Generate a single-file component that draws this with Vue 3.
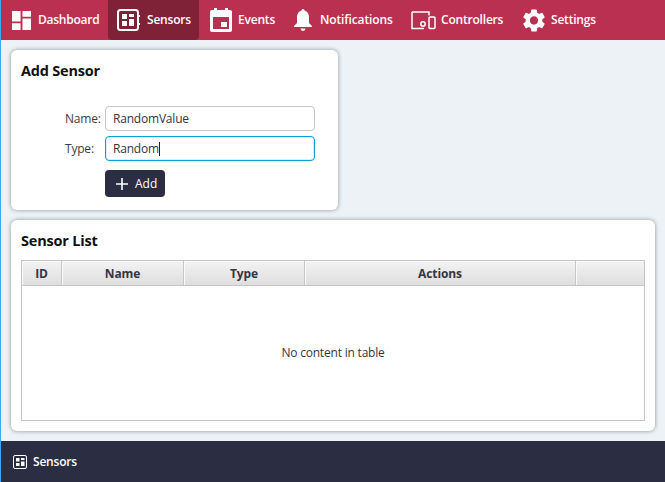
<script setup>
const columns = [
  { label: 'ID', width: 40 },
  { label: 'Name', width: 122 },
  { label: 'Type', width: 121 },
  { label: 'Actions', width: 271 },
  { label: '', width: 68 }
]
</script>

<template>
  <div class="window">
    <nav class="nav">
      <a class="item dash">
        <svg width="19" height="19" viewBox="0 0 20 20"><path fill="#fff" d="M0 0h9v11H0zM11 0h9v6h-9zM11 8h9v12h-9zM0 13h9v7H0z"/></svg>
        <span>Dashboard</span>
      </a>
      <a class="item active">
        <svg width="23" height="22" viewBox="0 0 23 22"><rect x="1" y="1" width="20" height="20" rx="2.500" fill="none" stroke="#fff" stroke-width="2"/><path fill="#fff" d="M5 5h5v5H5zM12 5h5v3h-5zM12 10h5v7h-5zM5 12h5v5H5zM21 6h2v2h-2zM21 14h2v2h-2z"/></svg>
        <span>Sensors</span>
      </a>
      <a class="item events">
        <svg width="22" height="24" viewBox="0 0 22 24"><path fill="#fff" fill-rule="evenodd" d="M4 0h3v2h8V0h3v2h2a2 2 0 0 1 2 2v18a2 2 0 0 1-2 2H2a2 2 0 0 1-2-2V4a2 2 0 0 1 2-2h2zM3 9v12h16V9zM11 14h6v5h-6z"/></svg>
        <span>Events</span>
      </a>
      <a class="item notif">
        <svg width="18" height="22" viewBox="0 0 18 22"><path fill="#fff" d="M9 0a1.6 1.6 0 0 1 1.6 1.7C13.6 2.4 15 5 15 8v6l3 3v1H0v-1l3-3V8c0-3 1.4-5.600 4.400-6.300A1.600 1.600 0 0 1 9 0zM6.500 19.500h5a2.500 2.500 0 0 1-5 0z"/></svg>
        <span>Notifications</span>
      </a>
      <a class="item ctrl">
        <svg width="25" height="19" viewBox="0 0 25 19"><path fill="none" stroke="#fff" stroke-width="1.500" d="M1 1h17v3.500M1 1v16.500h12"/><rect x="18" y="6" width="6" height="11.500" rx="1" fill="none" stroke="#fff" stroke-width="1.500"/><circle cx="12" cy="13" r="2.200" fill="none" stroke="#fff" stroke-width="1.500"/></svg>
        <span>Controllers</span>
      </a>
      <a class="item settings">
        <svg width="22" height="23" viewBox="2.500 2 19 20"><path fill="#fff" d="M19.14 12.94c.04-.3.06-.61.06-.94 0-.32-.02-.64-.07-.94l2.03-1.58a.49.49 0 0 0 .12-.61l-1.92-3.32a.488.488 0 0 0-.59-.22l-2.39.96c-.5-.38-1.03-.7-1.62-.94l-.36-2.54a.484.484 0 0 0-.48-.41h-3.84c-.24 0-.43.17-.47.41l-.36 2.54c-.59.24-1.13.57-1.62.94l-2.39-.96c-.22-.08-.47 0-.59.22L2.74 8.87c-.12.21-.08.47.12.61l2.03 1.58c-.05.3-.09.63-.09.94s.02.64.07.94l-2.03 1.58a.49.49 0 0 0-.12.61l1.92 3.32c.12.22.37.29.59.22l2.39-.96c.5.38 1.03.7 1.62.94l.36 2.54c.05.24.24.41.48.41h3.84c.24 0 .44-.17.47-.41l.36-2.54c.59-.24 1.13-.56 1.62-.94l2.39.96c.22.08.47 0 .59-.22l1.92-3.32c.12-.22.07-.47-.12-.61l-2.01-1.58zM12 15.6c-1.98 0-3.6-1.62-3.6-3.6s1.62-3.6 3.6-3.6 3.6 1.62 3.6 3.6-1.62 3.6-3.6 3.6z"/></svg>
        <span>Settings</span>
      </a>
    </nav>

    <main class="content">
      <section class="card add">
        <h2>Add Sensor</h2>
        <div class="form">
          <div class="row">
            <label class="lbl">Name:</label>
            <div class="input">RandomValue</div>
          </div>
          <div class="row">
            <label class="lbl">Type:</label>
            <div class="input focus">Random<i class="caret"></i></div>
          </div>
          <div class="row">
            <span class="lbl"></span>
            <button class="btn">
              <svg width="12" height="12" viewBox="0 0 12 12"><path fill="#fff" d="M5.200 0h1.600v5.200H12v1.600H6.800V12H5.200V6.800H0V5.200h5.200z"/></svg>
              <span>Add</span>
            </button>
          </div>
        </div>
      </section>

      <section class="card list">
        <h2>Sensor List</h2>
        <div class="table">
          <div class="thead">
            <div v-for="c in columns" :key="c.label" class="th" :style="{ width: c.width + 'px' }">{{ c.label }}</div>
          </div>
          <div class="empty">No content in table</div>
        </div>
      </section>
    </main>

    <footer class="foot">
      <svg width="14" height="14" viewBox="0 0 14 14"><rect x="0.500" y="0.500" width="13" height="13" rx="1.500" fill="none" stroke="#fff"/><path fill="#fff" d="M3 3h3.500v3.500H3zM8 3h3.500v2H8zM8 6.500h3.500V11H8zM3 8h3.500v3H3z"/></svg>
      <span>Sensors</span>
    </footer>
  </div>
</template>

<style>
html, body { margin: 0; padding: 0; }
</style>

<style scoped>
.window {
  width: 665px;
  height: 482px;
  box-sizing: border-box;
  display: flex;
  flex-direction: column;
  background: #ecf2f5;
  border-left: 1px solid #3ba9f0;
  font-family: "Open Sans", "Noto Sans", sans-serif;
  font-size: 12px;
  color: #2a2d33;
  overflow: hidden;
}
.nav {
  height: 40px;
  flex: none;
  display: flex;
  align-items: center;
  background: #b93050;
  color: #fff;
  font-weight: 600;
}
.item {
  height: 40px;
  display: flex;
  align-items: center;
  box-sizing: border-box;
  letter-spacing: -0.2px;
}
.item span { padding-bottom: 2px; }
.dash { padding-left: 11px; gap: 7px; width: 106px; letter-spacing: -0.25px; }
.dash + .item { margin-left: 1px; }
.active {
  width: 91px;
  padding-left: 9px;
  gap: 7px;
  background: #7f2237;
  border-radius: 0 0 4px 4px;
}
.events { margin-left: 11px; gap: 6px; width: 84px; }
.notif { gap: 8px; width: 117px; letter-spacing: -0.12px; }
.ctrl { gap: 5px; width: 111px; }
.settings { gap: 6px; margin-left: 1px; }
.content {
  flex: 1;
  display: flex;
  flex-direction: column;
  align-items: flex-start;
  gap: 10px;
  padding: 10px;
}
.card {
  box-sizing: border-box;
  background: #fff;
  border-radius: 6px;
  box-shadow: 0 0 4px rgba(60, 70, 80, 0.55);
  padding: 10px;
}
.add { width: 327px; height: 160px; }
.list { width: 644px; height: 211px; }
h2 {
  margin: 0;
  font-size: 14.5px;
  line-height: 21px;
  font-weight: 700;
  color: #111;
  letter-spacing: -0.2px;
}
.form {
  margin-top: 25px;
  display: flex;
  flex-direction: column;
  gap: 5px;
}
.row {
  display: flex;
  align-items: center;
}
.lbl {
  width: 84px;
  flex: none;
  box-sizing: border-box;
  padding-left: 44px;
  color: #3a3d44;
  letter-spacing: -0.2px;
}
.input {
  width: 210px;
  height: 25px;
  box-sizing: border-box;
  border: 1px solid #c6c6c6;
  border-radius: 4px;
  background: #fff;
  padding-left: 7px;
  line-height: 23px;
  color: #33363c;
  letter-spacing: -0.2px;
}
.focus {
  border: 1px solid #0f9fd8;
  box-shadow: inset 0 0 0 1px #d6eff8;
}
.caret {
  display: inline-block;
  width: 1px;
  height: 14px;
  background: #222;
  vertical-align: -3px;
}
.btn {
  margin-top: 4px;
  width: 60px;
  height: 27px;
  display: flex;
  align-items: center;
  gap: 7px;
  padding: 0 0 0 11px;
  border: none;
  border-radius: 4px;
  background: #2b2d42;
  color: #fff;
  font: inherit;
}
.table {
  margin-top: 9px;
  height: 161px;
  border: 1px solid #c6c6c6;
  box-sizing: border-box;
  display: flex;
  flex-direction: column;
}
.thead {
  display: flex;
  height: 24px;
  flex: none;
  box-sizing: content-box;
  border-bottom: 1px solid #c6c6c6;
}
.th {
  box-sizing: border-box;
  flex: none;
  height: 24px;
  padding-top: 1px;
  line-height: 24px;
  text-align: center;
  font-weight: 700;
  color: #33363f;
  background: linear-gradient(#f3f3f3, #dedede);
  border-right: 1px solid #c6c6c6;
  box-shadow: inset 1px 1px 0 #fafafa;
  letter-spacing: -0.1px;
}
.th:last-child { border-right: none; }
.empty {
  flex: 1;
  display: flex;
  align-items: center;
  justify-content: center;
  padding-bottom: 2px;
  color: #33363c;
  letter-spacing: -0.2px;
}
.foot {
  height: 41px;
  flex: none;
  display: flex;
  align-items: center;
  gap: 6px;
  padding-left: 12px;
  background: #2b2d42;
  color: #fff;
  font-weight: 600;
  letter-spacing: -0.2px;
}
</style>
